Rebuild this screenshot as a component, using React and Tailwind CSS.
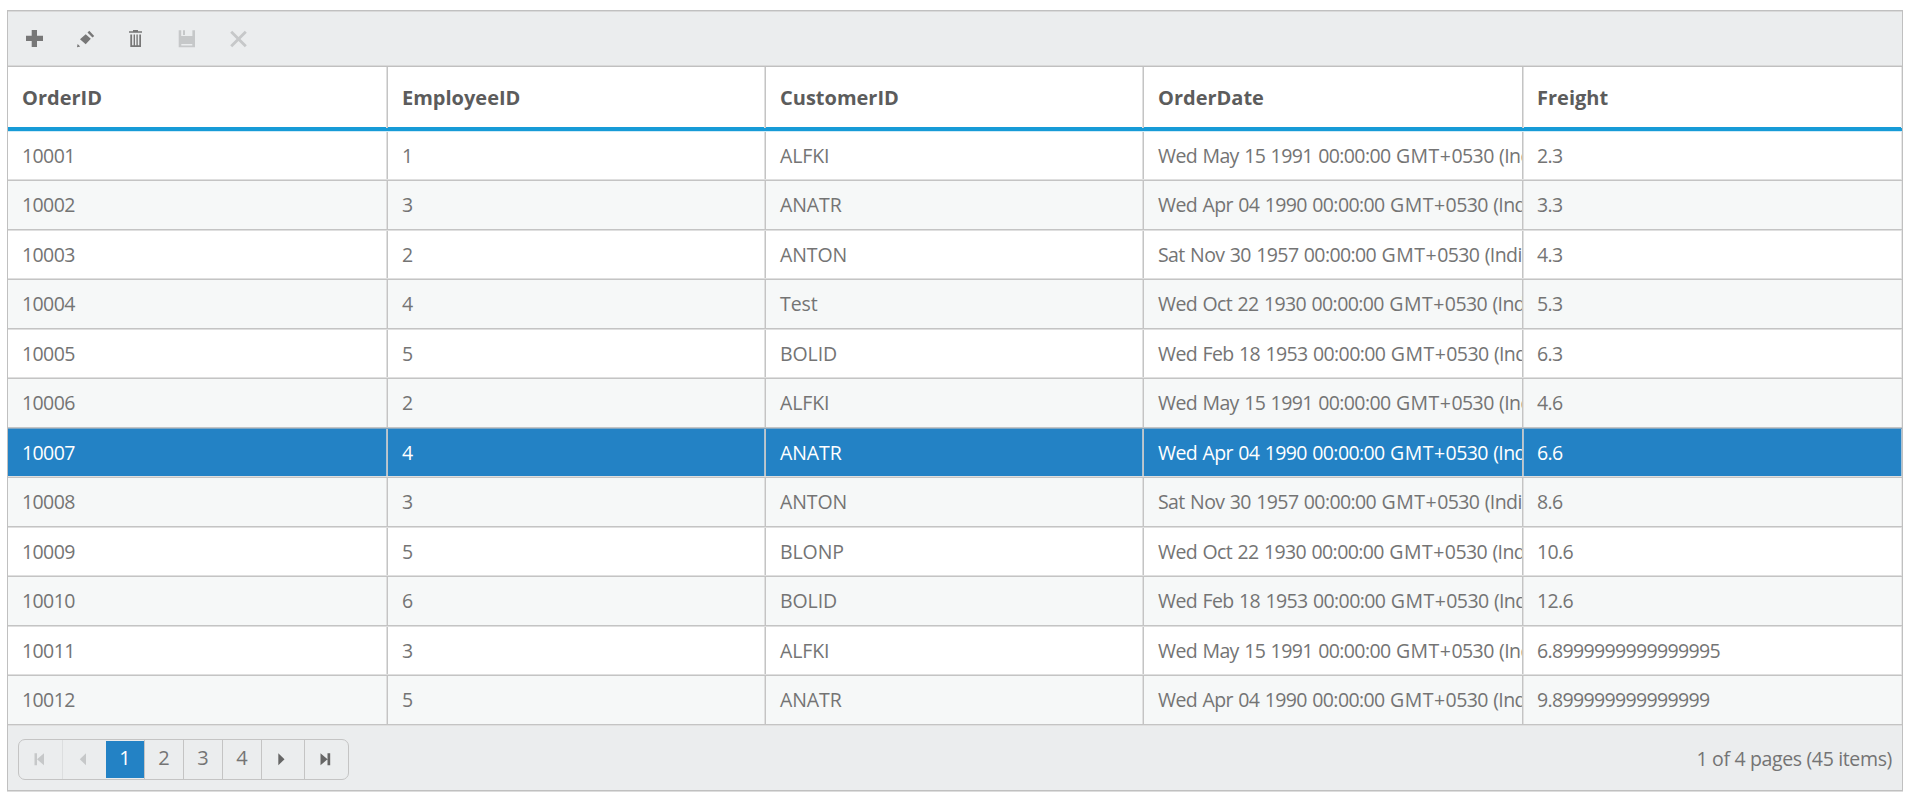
const columns = ["OrderID", "EmployeeID", "CustomerID", "OrderDate", "Freight"];

const may = ["Wed May 15 1991 00:00:00 ", "GMT+", "0530 (India Standard Time)"];
const apr = ["Wed Apr 04 1990 00:00:00 ", "GMT+", "0530 (India Standard Time)"];
const nov = ["Sat Nov 30 1957 00:00:00 ", "GMT+", "0530 (India Standard Time)"];
const oct = ["Wed Oct 22 1930 00:00:00 ", "GMT+", "0530 (India Standard Time)"];
const feb = ["Wed Feb 18 1953 00:00:00 ", "GMT+", "0530 (India Standard Time)"];

const orders = [
  ["10001", "1", "ALFKI", may, "2.3"],
  ["10002", "3", "ANATR", apr, "3.3"],
  ["10003", "2", "ANTON", nov, "4.3"],
  ["10004", "4", "Test", oct, "5.3"],
  ["10005", "5", "BOLID", feb, "6.3"],
  ["10006", "2", "ALFKI", may, "4.6"],
  ["10007", "4", "ANATR", apr, "6.6"],
  ["10008", "3", "ANTON", nov, "8.6"],
  ["10009", "5", "BLONP", oct, "10.6"],
  ["10010", "6", "BOLID", feb, "12.6"],
  ["10011", "3", "ALFKI", may, "6.8999999999999995"],
  ["10012", "5", "ANATR", apr, "9.899999999999999"],
];
const selectedId = "10007";

const gridCols = "grid grid-cols-[380px_378px_378px_379px_379px]";

const cellStyles = [
  "pl-[14px] tracking-[-0.6px]",
  "pl-[14px] tracking-[-0.6px]",
  "pl-[14px] tracking-[-0.1px]",
  "pl-[14px] tracking-[-0.6px] [word-spacing:0.9px]",
  "pl-[14px] tracking-[-0.65px]",
];

// Hairlines between columns: one solid pixel with a fainter pixel beside it.
function divider(i, selected) {
  if (i === 3) return "border-r border-[#c4c4c4]";
  if (i === 4) {
    return selected
      ? "shadow-[inset_1px_0_#a9c3d6,inset_-1px_0_#a9c3d6]"
      : "shadow-[inset_1px_0_#e0e0e0,inset_-1px_0_#e8e8e8]";
  }
  return selected
    ? "border-r border-[#c4c4c4] shadow-[inset_-1px_0_#a9c3d6]"
    : "border-r border-[#c4c4c4] shadow-[inset_-1px_0_#e0e0e0]";
}

function Icon({ children, className }) {
  return (
    <svg width="20" height="20" viewBox="0 0 20 20" className={className} fill="currentColor">
      {children}
    </svg>
  );
}

function Toolbar() {
  return (
    <div className="flex h-[53px] items-start gap-[31px] bg-[#ebedee] pt-[17px] pl-[17px] text-[#777777]">
      <Icon><path d="M6.700 1H12v5.700h6V12h-6v6H6.700v-6H1V6.700h5.700z" /></Icon>
      <Icon><path d="M4 10.300 9.700 5.200 14.800 9.800 9.700 15.300zM11.500 3.400 13.300 1.800 18.200 6.900 16.500 8.400zM1 18.300 1.600 15 4.200 17.600z" /></Icon>
      <Icon><path d="M6 1h5v1.300h4v1.500H2V2.300h4zM3.300 5.500h1.800v10.700h1.500V5.500H8v10.700h1.400V5.500h1.400v10.700h1.500V5.500H14V18H3.300z" /></Icon>
      <Icon className="text-[#c6c8c9]"><path d="M.7 1.300h2.500v5.700h11.200V1.300H17v17H.7zM5 1.300h2v4.700H5zM3.300 15V16.500h11V15z" fillRule="evenodd" /></Icon>
      <Icon className="text-[#c6c8c9]"><path d="M1.200 3.800 3.200 1.800 9.500 8.100 15.800 1.800 17.800 3.800 11.500 10.100 17.800 16.300 15.800 18.300 9.500 12.100 3.200 18.300 1.200 16.300 7.500 10.100z" /></Icon>
    </div>
  );
}

function Row({ cells, index }) {
  const selected = cells[0] === selectedId;
  const even = index % 2 === 0;
  const tone = selected
    ? "bg-[#2382c5] text-white"
    : even
      ? "bg-white text-[#747474]"
      : "bg-[#f6f8f8] text-[#747474]";
  const beforeSelected = orders[index + 1]?.[0] === selectedId;
  const outer = even
    ? "h-[49px] border-[#c4c4c4]"
    : beforeSelected
      ? "h-[50px] border-[#7fa5c2]"
      : "h-[50px] border-[#dfdfdf]";
  const inner = even ? "h-[48px] border-[#dfdfdf]" : "h-[49px] border-[#c4c4c4]";
  return (
    <div className={`border-b ${outer}`}>
      <div className={`${gridCols} border-b ${inner} ${tone}`}>
        {cells.map((cell, i) => (
          <div
            key={columns[i]}
            className={`overflow-hidden text-[19.5px] whitespace-pre ${even ? "leading-[47px]" : "leading-[48px]"} ${cellStyles[i]} ${divider(i, selected)}`}
          >
            {i === 3 ? (
              <>
                {cell[0]}
                <span className="tracking-[0.5px]">{cell[1]}</span>
                {cell[2]}
              </>
            ) : (
              cell
            )}
          </div>
        ))}
      </div>
    </div>
  );
}

function Pager() {
  const cell = "flex items-center justify-center border-l border-[#c4c4c4]";
  return (
    <div className="flex h-[64px] items-start justify-between bg-[#ebedee] pt-[13px] pr-[10px] pl-[10px] text-[20px] text-[#747474]">
      <div className="flex h-[41px] overflow-hidden rounded-[7px] border border-[#c4c4c4]">
        <div className="flex w-[44px] items-center justify-center border-r border-[#dcdedf] text-[#c6c8c9]">
          <Icon><path d="M3.500 3.300H6v12H3.500zM13 3.300v12L6 9.300z" /></Icon>
        </div>
        <div className="flex w-[43px] items-center justify-center text-[#c6c8c9]">
          <Icon><path d="M11 3.300v12L4.800 9.300z" /></Icon>
        </div>
        <div className="my-px flex w-[38px] items-center justify-center bg-[#2382c5] pb-[3px] text-white">1</div>
        <div className={`${cell} w-[39px] pb-[3px]`}>2</div>
        <div className={`${cell} w-[39px] pb-[3px]`}>3</div>
        <div className={`${cell} w-[39px] pb-[3px]`}>4</div>
        <div className={`${cell} w-[43px] text-[#666666]`}>
          <Icon><path d="M5.300 3.300v12L11.500 9.300z" /></Icon>
        </div>
        <div className={`${cell} w-[44px] text-[#666666]`}>
          <Icon><path d="M3.500 3.300v12L10.500 9.300zM10.500 3.300H13.200v12H10.500z" /></Icon>
        </div>
      </div>
      <div className="text-[19.5px] leading-[39px] tracking-[-0.35px]">1 of 4 pages (45 items)</div>
    </div>
  );
}

export default function App() {
  return (
    <div className="h-[801px] w-[1911px] overflow-hidden bg-white pt-[10px] pl-[7px] font-['Open_Sans','Noto_Sans',sans-serif]">
      <div className="w-[1896px] border border-[#c0c0c0] shadow-[0_1px_#dddddd]">
        <div className="border-t border-b border-t-[#d9d9d9] border-b-[#d9d9d9]">
          <Toolbar />
        </div>
        <div className={`${gridCols} h-[61px] border-t border-[#c0c0c0]`}>
          {columns.map((name, i) => (
            <div
              key={name}
              className={`pl-[14px] text-[20px] leading-[61px] font-bold text-[#5c5c5c] ${divider(i, false)}`}
            >
              {name}
            </div>
          ))}
        </div>
        <div className="h-[5px] border-b border-[#d0ebf7] bg-[#179bd7]" />
        {orders.map((order, i) => (
          <Row key={order[0]} cells={order} index={i} />
        ))}
        <Pager />
      </div>
    </div>
  );
}
